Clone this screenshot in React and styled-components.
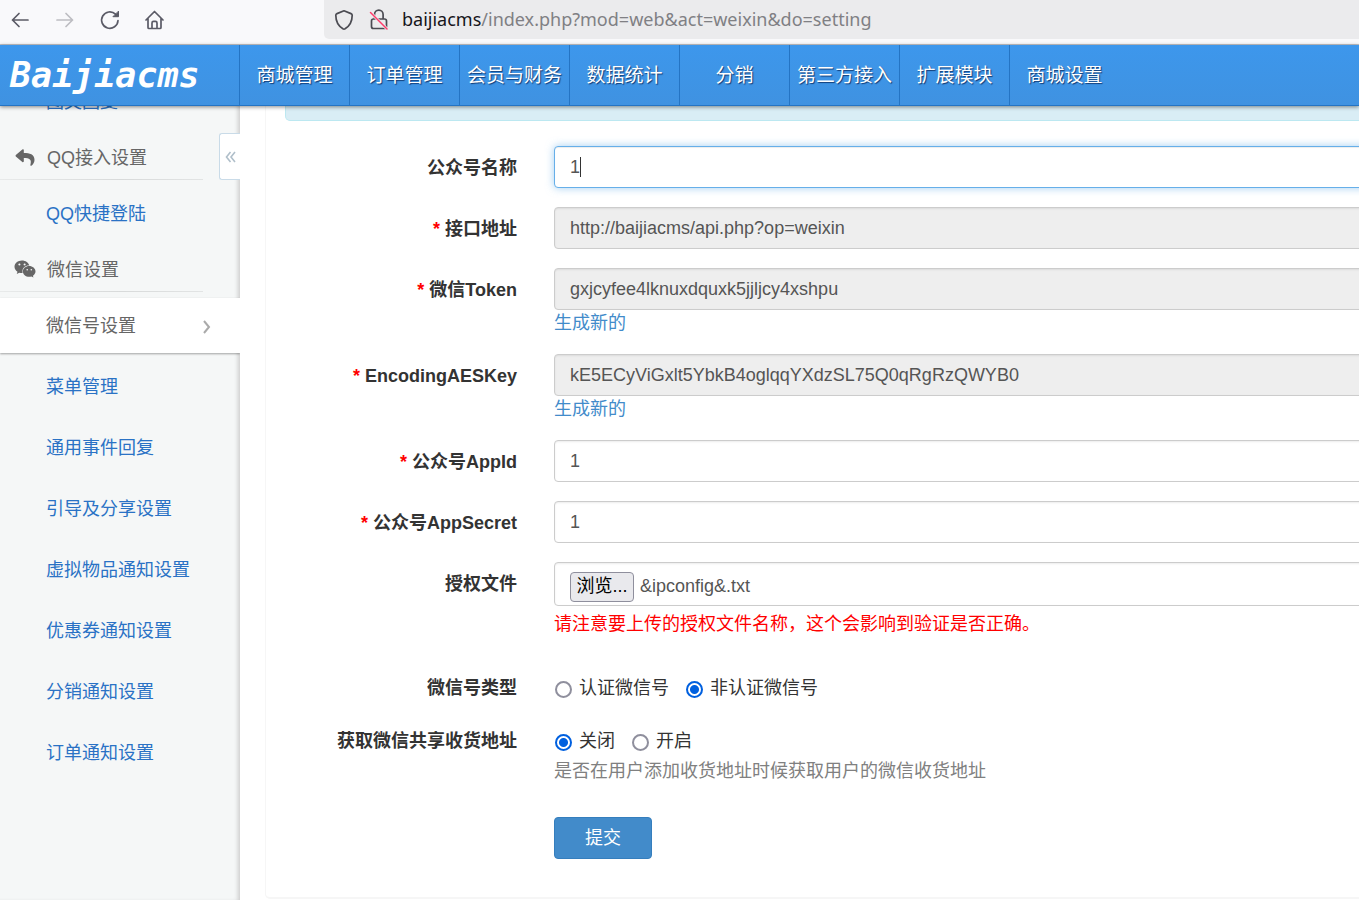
import React, { useRef, useState } from "react";
import styled, { createGlobalStyle, css } from "styled-components";
import { FaReply, FaWeixin } from "react-icons/fa";

const GlobalStyle = createGlobalStyle`
  *, *::before, *::after { box-sizing: border-box; }
  body {
    margin: 0;
    background: #fff;
    color: #333;
    font-family: "Liberation Sans", "Noto Sans CJK SC", sans-serif;
    font-size: 18px;
    line-height: 25px;
    overflow-x: hidden;
  }
  a { text-decoration: none; }
`;

/* ---------- browser bar ---------- */

const BrowserBar = styled.header`
  display: flex;
  height: 45px;
  background: #f9f9fb;
  border-bottom: 1px solid #c4c4c8;
`;

const BrowserButtons = styled.div`
  display: flex;
  align-items: center;
  gap: 21px;
  width: 324px;
  height: 39px;
  padding-left: 8px;
  flex: none;
`;

const IconButton = styled.button`
  display: flex;
  padding: 0;
  border: 0;
  background: none;
  color: #5b5b66;
  &:disabled { color: #bdbdc2; }
`;

const AddressBar = styled.div`
  display: flex;
  align-items: center;
  flex: 1;
  height: 39px;
  padding-left: 8px;
  gap: 12px;
  border-radius: 0 0 0 5px;
  background: #ebebed;
  color: #4b4b52;
`;

const Url = styled.span`
  font-family: "Noto Sans", "Open Sans", sans-serif;
  font-size: 18px;
  color: #808084;
  white-space: nowrap;
  b { font-weight: 400; color: #15141a; }
`;

/* ---------- top navigation ---------- */

const TopNav = styled.nav`
  position: relative;
  z-index: 2;
  display: flex;
  height: 61px;
  background: linear-gradient(#3d97ec, #3f92e1);
  border-bottom: 1px solid #2474c4;
  box-shadow: 0 1px 4px rgba(0, 0, 0, 0.45);
`;

const Logo = styled.a`
  flex: none;
  width: 239px;
  padding-left: 10px;
  font: italic 700 35px/60px "DejaVu Sans Mono", monospace;
  color: #fff;
`;

const NavLink = styled.a`
  flex: none;
  width: 110px;
  border-left: 1px solid #2474c4;
  text-align: center;
  font-size: 19px;
  line-height: 62px;
  height: 60px;
  color: #fff;
  text-shadow: 1px 1px 1px rgba(0, 30, 80, 0.75);
  white-space: nowrap;
`;

/* ---------- sidebar ---------- */

const Body = styled.div`
  display: flex;
  min-height: calc(100vh - 106px);
`;

const Sidebar = styled.aside`
  position: relative;
  flex: none;
  width: 240px;
  overflow: hidden;
  background: #f5f7f7;
  box-shadow: inset -4px 0 4px -2px #ccc;
`;

const Menu = styled.ul`
  display: flex;
  flex-direction: column;
  gap: 6px;
  margin: -32px 0 0;
  padding: 0;
  list-style: none;
`;

const MenuHeading = styled.li`
  display: flex;
  align-items: center;
  height: 45px;
  padding: 1px 0 0 14px;
  color: #666;
  background: linear-gradient(90deg, #e8eaea, #d8dada 60%, #e2e4e4) left bottom / 203px 1px no-repeat;
  svg { width: 22px; margin: 0 11px 2px 0; }
`;

const MenuLink = styled.a`
  display: flex;
  align-items: center;
  justify-content: space-between;
  height: 55px;
  padding: 2px 29px 0 46px;
  color: #2a72c5;
  ${(p) => p.$active && css`
    color: #666;
    background: #fff;
    box-shadow: 0 1px 2px rgba(0, 0, 0, 0.35);
  `}
`;

const Collapse = styled.button`
  position: absolute;
  top: 27px;
  right: 0;
  display: flex;
  align-items: center;
  width: 21px;
  height: 47px;
  padding: 0 0 0 5px;
  border: 1px solid #c9dbe8;
  border-right: 0;
  border-radius: 3px 0 0 3px;
  background: #fff;
  color: #b0bfca;
`;

/* ---------- form ---------- */

const Main = styled.main`
  flex: 1;
  min-width: 0;
  overflow: hidden;
  padding-left: 25px;
`;

const Panel = styled.section`
  margin-right: -24px;
  padding: 0 0 38px 19px;
  border: solid #f6f6f6;
  border-width: 0 0 2px 1px;
  border-radius: 0 0 0 5px;
`;

const Notice = styled.div`
  height: 15px;
  border: 1px solid #bce8f1;
  border-top: 0;
  border-radius: 0 0 0 5px;
  background: #d9edf5;
`;

const Form = styled.form`
  display: flex;
  flex-direction: column;
  gap: 19px;
  padding-top: 25px;
`;

const Row = styled.div`
  display: grid;
  grid-template-columns: 232px 1fr;
  column-gap: 37px;
  margin-top: ${(p) => (p.$spaced ? "14px" : "0")};
`;

const Caption = styled.label`
  text-align: right;
  font-weight: 700;
  line-height: ${(p) => (p.$compact ? "36px" : "44px")};
  height: ${(p) => (p.$compact ? "34px" : "42px")};
  white-space: nowrap;
`;

const Required = styled.span`
  color: #f00;
`;

const Field = styled.div`
  position: relative;
  grid-column: 2;
  min-width: 0;
`;

const controlBox = css`
  display: block;
  width: 100%;
  height: 42px;
  padding: 1px 15px 0;
  border: 1px solid #ccc;
  border-radius: 4px;
  background: #fff;
  box-shadow: inset 0 1px 2px rgba(0, 0, 0, 0.08);
  color: #555;
  font: inherit;
`;

const TextInput = styled.input`
  ${controlBox}
  outline: 0;
  &:read-only { background: #eee; }
  ${(p) => p.$focused && css`
    border-color: #66afe9;
    box-shadow: inset 0 1px 1px rgba(0, 0, 0, 0.075), 0 0 9px rgba(102, 175, 233, 0.6);
  `}
`;

const Caret = styled.span`
  position: absolute;
  top: 11px;
  left: 26px;
  width: 1px;
  height: 20px;
  background: #333;
`;

const FileBox = styled.div`
  ${controlBox}
  display: flex;
  align-items: center;
  gap: 6px;
  height: 44px;
  padding-top: 5px;
`;

const BrowseButton = styled.button`
  width: 64px;
  height: 30px;
  padding: 0;
  border: 1px solid #8f8f9d;
  border-radius: 4px;
  background: #e9e9ed;
  color: #000;
  font: inherit;
`;

const HelpLink = styled.a`
  display: block;
  height: 25px;
  line-height: 27px;
  color: #428bca;
`;

const Hint = styled.div`
  margin-top: ${(p) => (p.$warning ? "6px" : "2px")};
  color: ${(p) => (p.$warning ? "#f00" : "#808080")};
  white-space: nowrap;
`;

const Options = styled.div`
  display: flex;
  gap: 16px;
  height: 34px;
  padding-top: 2px;
`;

const Option = styled.label`
  display: flex;
  align-items: center;
  gap: 7px;
`;

const Radio = styled.input`
  appearance: none;
  width: 17px;
  height: 17px;
  margin: 2px 0 0 1px;
  border: 2px solid #8f8f9d;
  border-radius: 50%;
  background: #fff;
  &:checked {
    border-color: #0060df;
    background: radial-gradient(circle, #0060df 4px, #fff 5px);
  }
`;

const Submit = styled.button`
  width: 98px;
  height: 42px;
  padding: 1px 0 0;
  border: 1px solid #357ebd;
  border-radius: 4px;
  background: #428bca;
  color: #fff;
  font: inherit;
`;

/* ---------- icons ---------- */

const Icon = ({ size = 22, children, ...rest }) => (
  <svg width={size} height={size} viewBox={`0 0 ${size} ${size}`} fill="none" stroke="currentColor"
    strokeWidth="1.7" strokeLinecap="round" strokeLinejoin="round" aria-hidden="true" {...rest}>
    {children}
  </svg>
);

const BackIcon = () => <Icon size={24}><path d="M20 12H4.500M11 5.500L4.500 12l6.500 6.500" /></Icon>;
const ForwardIcon = () => <Icon size={24}><path d="M4 12h15.500M13 5.500l6.500 6.500-6.500 6.500" /></Icon>;
const ReloadIcon = () => (
  <Icon size={24}>
    <path d="M20 12.500a8.200 8.200 0 1 1-2.500-6.300" />
    <path d="M20.500 3.500v5.200h-5.200z" fill="currentColor" strokeWidth="1" />
  </Icon>
);
const HomeIcon = () => (
  <Icon size={24}>
    <path d="M3 12L11.500 3.500l8.500 8.500M5 10.500v9c0 .6.400 1 1 1h11c.6 0 1-.4 1-1v-9M9 20v-5c0-1 .6-1.600 1.500-1.600h2c.9 0 1.500.6 1.500 1.600v5" />
  </Icon>
);
const ShieldIcon = () => (
  <Icon size={24}><path d="M12 2.800l7 2.800c.8.300 1.200.9 1.200 1.700 0 6-2.700 10.800-7.100 13.500-.7.400-1.500.4-2.200 0C6.500 18.100 3.800 13.300 3.800 7.300c0-.8.400-1.400 1.200-1.700z" /></Icon>
);
const LockIcon = () => (
  <Icon size={22}>
    <path d="M6.500 10V5.500a4.300 4.300 0 0 1 8.600 0V10M5.500 10h11c1.200 0 2 .8 2 2v5.500c0 1.200-.8 2-2 2h-11c-1.200 0-2-.8-2-2V12c0-1.200.8-2 2-2z" />
    <path d="M2.500 3.500l16.500 16.500" stroke="#ebebed" strokeWidth="3" />
    <path d="M2.500 3.500l16.500 16.500" stroke="#ff3b6b" strokeWidth="1.500" />
  </Icon>
);

/* ---------- page ---------- */

const navItems = ["商城管理", "订单管理", "会员与财务", "数据统计", "分销", "第三方接入", "扩展模块", "商城设置"];
const wechatItems = ["菜单管理", "通用事件回复", "引导及分享设置", "虚拟物品通知设置", "优惠券通知设置", "分销通知设置", "订单通知设置"];

const TextRow = ({ id, label, required, value, readOnly, focused, helper }) => (
  <Row>
    <Caption htmlFor={id}>{required && <Required>* </Required>}{label}</Caption>
    <Field>
      <TextInput id={id} type="text" defaultValue={value} readOnly={readOnly} $focused={focused} />
      {focused && <Caret />}
      {helper && <HelpLink href="#">{helper}</HelpLink>}
    </Field>
  </Row>
);

const RadioRow = ({ name, label, options, initial, hint, spaced }) => {
  const [value, setValue] = useState(initial);
  return (
    <Row $spaced={spaced} role="radiogroup" aria-labelledby={`${name}-caption`}>
      <Caption as="span" id={`${name}-caption`} $compact>{label}</Caption>
      <Field>
        <Options>
          {options.map((o) => (
            <Option key={o}>
              <Radio type="radio" name={name} checked={value === o} onChange={() => setValue(o)} />
              {o}
            </Option>
          ))}
        </Options>
        {hint && <Hint>{hint}</Hint>}
      </Field>
    </Row>
  );
};

const FileRow = () => {
  const picker = useRef(null);
  const [name, setName] = useState("&ipconfig&.txt");
  return (
    <Row>
      <Caption htmlFor="auth-file">授权文件</Caption>
      <Field>
        <FileBox>
          <BrowseButton type="button" onClick={() => picker.current.click()}>浏览...</BrowseButton>
          <span>{name}</span>
          <input id="auth-file" type="file" hidden ref={picker}
            onChange={(e) => e.target.files[0] && setName(e.target.files[0].name)} />
        </FileBox>
        <Hint $warning>请注意要上传的授权文件名称，这个会影响到验证是否正确。</Hint>
      </Field>
    </Row>
  );
};

export default function App() {
  return (
    <>
      <GlobalStyle />
      <BrowserBar>
        <BrowserButtons>
          <IconButton aria-label="后退"><BackIcon /></IconButton>
          <IconButton aria-label="前进" disabled><ForwardIcon /></IconButton>
          <IconButton aria-label="刷新"><ReloadIcon /></IconButton>
          <IconButton aria-label="主页"><HomeIcon /></IconButton>
        </BrowserButtons>
        <AddressBar>
          <ShieldIcon />
          <LockIcon />
          <Url><b>baijiacms</b>/index.php?mod=web&amp;act=weixin&amp;do=setting</Url>
        </AddressBar>
      </BrowserBar>

      <TopNav>
        <Logo href="#">Baijiacms</Logo>
        {navItems.map((t) => <NavLink key={t} href="#">{t}</NavLink>)}
      </TopNav>

      <Body>
        <Sidebar>
          <Menu>
            <li><MenuLink href="#">图文回复</MenuLink></li>
            <MenuHeading><FaReply size={19} />QQ接入设置</MenuHeading>
            <li><MenuLink href="#">QQ快捷登陆</MenuLink></li>
            <MenuHeading><FaWeixin size={22} />微信设置</MenuHeading>
            <li>
              <MenuLink href="#" $active>
                微信号设置
                <svg width="9" height="14" viewBox="0 0 9 14" fill="none" stroke="#aaa" strokeWidth="2" aria-hidden="true">
                  <path d="M2 1l5 6-5 6" />
                </svg>
              </MenuLink>
            </li>
            {wechatItems.map((t) => <li key={t}><MenuLink href="#">{t}</MenuLink></li>)}
          </Menu>
          <Collapse aria-label="收起菜单">
            <svg width="11" height="12" viewBox="0 0 11 12" fill="none" stroke="currentColor" strokeWidth="1.600" aria-hidden="true">
              <path d="M5.500 1L1.500 6l4 5M10 1L6 6l4 5" />
            </svg>
          </Collapse>
        </Sidebar>

        <Main>
          <Panel>
            <Notice />
            <Form onSubmit={(e) => e.preventDefault()}>
              <TextRow id="name" label="公众号名称" value="1" focused />
              <TextRow id="url" label="接口地址" required value="http://baijiacms/api.php?op=weixin" readOnly />
              <TextRow id="token" label="微信Token" required value="gxjcyfee4lknuxdquxk5jjljcy4xshpu" readOnly helper="生成新的" />
              <TextRow id="aes" label="EncodingAESKey" required value="kE5ECyViGxlt5YbkB4oglqqYXdzSL75Q0qRgRzQWYB0" readOnly helper="生成新的" />
              <TextRow id="appid" label="公众号AppId" required value="1" />
              <TextRow id="secret" label="公众号AppSecret" required value="1" />
              <FileRow />
              <RadioRow name="type" label="微信号类型" options={["认证微信号", "非认证微信号"]} initial="非认证微信号" spaced />
              <RadioRow name="share" label="获取微信共享收货地址" options={["关闭", "开启"]} initial="关闭"
                hint="是否在用户添加收货地址时候获取用户的微信收货地址" />
              <Row $spaced>
                <Field><Submit type="submit">提交</Submit></Field>
              </Row>
            </Form>
          </Panel>
        </Main>
      </Body>
    </>
  );
}
